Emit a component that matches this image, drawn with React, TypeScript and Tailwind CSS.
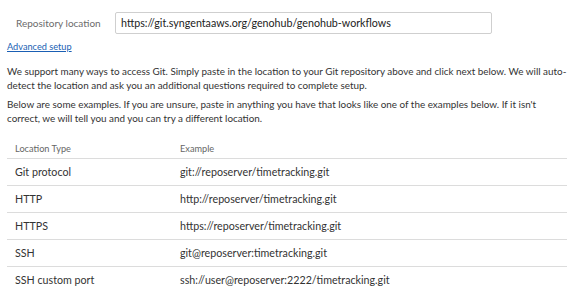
import React from "react";

const rows: [string, string][] = [
  ["Git protocol", "git://reposerver/timetracking.git"],
  ["HTTP", "http://reposerver/timetracking.git"],
  ["HTTPS", "https://reposerver/timetracking.git"],
  ["SSH", "git@reposerver:timetracking.git"],
  ["SSH custom port", "ssh://user@reposerver:2222/timetracking.git"],
];

export default function App() {
  return (
    <div
      className="w-[579px] h-[288px] bg-white text-[#333] overflow-hidden px-[7px] pt-[12px]"
      style={{ fontFamily: 'Lato, "Open Sans", sans-serif' }}
    >
      <div className="flex items-center h-[22px]">
        <div className="w-[108px] pl-[9px] text-[10px] text-[#6b6b6b] whitespace-nowrap">Repository location</div>
        <div className="w-[377px] h-[22px] border border-[#cfcfcf] rounded-[2px] flex items-center px-[5px] text-[10.7px] text-[#222] whitespace-nowrap">
          https://git.syngentaaws.org/genohub/genohub-workflows
        </div>
      </div>
      <div className="mt-[6px] text-[9.2px] text-[#1a5fb4] underline leading-[14px]">Advanced setup</div>
      <p className="mt-[10px] text-[9.9px] leading-[14px] text-[#333]">
        We support many ways to access Git. Simply paste in the location to your Git repository above and click next below. We will auto-detect the location and ask you an additional questions required to complete setup.
      </p>
      <p className="mt-[5px] text-[9.9px] leading-[14px] text-[#333]">
        Below are some examples. If you are unsure, paste in anything you have that looks like one of the examples below. If it isn't
        <br />
        correct, we will tell you and you can try a different location.
      </p>
      <div className="mt-[15px] w-[560px]">
        <div className="flex items-center h-[19px] border-b border-[#dcdcdc] text-[9.2px] text-[#666]">
          <div className="w-[173px] pl-[8px]">Location Type</div>
          <div>Example</div>
        </div>
        {rows.map(([t, e]) => (
          <div key={t} className="flex items-center h-[27px] border-b border-[#dcdcdc] text-[10.7px] text-[#333]">
            <div className="w-[173px] pl-[8px]">{t}</div>
            <div>{e}</div>
          </div>
        ))}
      </div>
    </div>
  );
}
